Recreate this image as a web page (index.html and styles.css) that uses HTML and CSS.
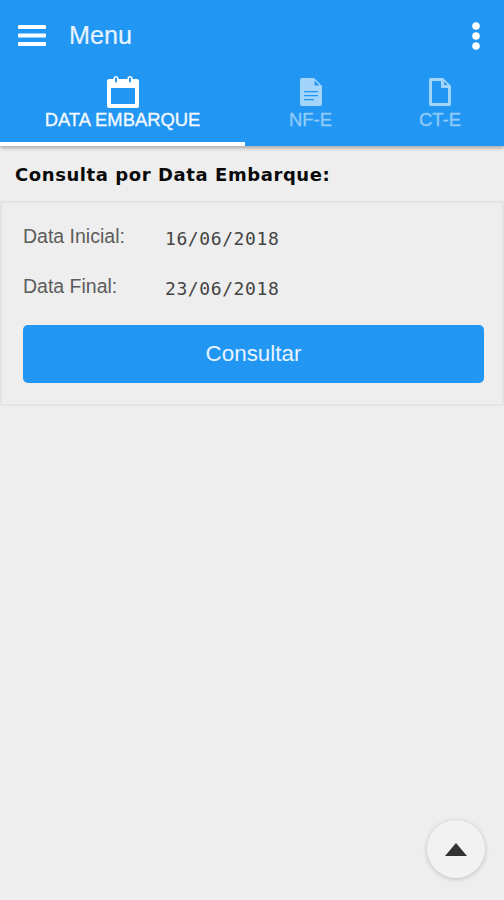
FILE: index.html
```html
<!DOCTYPE html>
<html lang="en">

<head>
    <meta charset="UTF-8">
    <meta name="viewport" content="width=device-width, initial-scale=1.0">
    <title>Consulta por Data Embarque</title>
    <link rel="stylesheet" href="styles.css">
</head>

<body>
    <div class="container">
        <header class="app-header">
            <div class="toolbar">
                <svg class="menu-icon" width="28" height="21" viewBox="0 0 28 21">
                    <rect x="0" y="0" width="28" height="4" rx="1" />
                    <rect x="0" y="8.500" width="28" height="4" rx="1" />
                    <rect x="0" y="17" width="28" height="4" rx="1" />
                </svg>
                <span class="toolbar-title">Menu</span>
                <svg class="more-icon" width="10" height="28" viewBox="0 0 10 28">
                    <circle cx="5" cy="4" r="3.8" />
                    <circle cx="5" cy="14" r="3.8" />
                    <circle cx="5" cy="24" r="3.8" />
                </svg>
            </div>

            <nav class="tabs">
                <div class="tab tab-date active">
                    <svg width="32" height="32" viewBox="0 0 32 32">
                        <path fill-rule="evenodd" d="M2 3h4.500V2.500a2.500 2.500 0 0 1 5 0V3h9V2.500a2.500 2.500 0 0 1 5 0V3H30a2 2 0 0 1 2 2v25a2 2 0 0 1-2 2H2a2 2 0 0 1-2-2V5a2 2 0 0 1 2-2zM4 12v16h24V12zM8 2.500v3a1 1 0 0 0 2 0v-3a1 1 0 0 0-2 0zM22 2.500v3a1 1 0 0 0 2 0v-3a1 1 0 0 0-2 0z" />
                    </svg>
                    <span>DATA EMBARQUE</span>
                </div>
                <div class="tab tab-nfe">
                    <svg width="22" height="28" viewBox="0 0 22 28">
                        <path fill-rule="evenodd" d="M2 0h12l8 8v18a2 2 0 0 1-2 2H2a2 2 0 0 1-2-2V2a2 2 0 0 1 2-2zM14.500 2.500V7.500h5zM4 13v1.200h14V13zM4 17v1.200h14V17zM4 21v1.200h10V21z" />
                    </svg>
                    <span>NF-E</span>
                </div>
                <div class="tab tab-cte">
                    <svg width="22" height="28" viewBox="0 0 22 28">
                        <path fill-rule="evenodd" d="M2 0h12l8 8v18a2 2 0 0 1-2 2H2a2 2 0 0 1-2-2V2a2 2 0 0 1 2-2zM3 3v22h16V10h-7V3zM15 3.500V7h3.500z" />
                    </svg>
                    <span>CT-E</span>
                </div>
            </nav>
        </header>

        <h2 class="page-title">Consulta por Data Embarque:</h2>

        <section class="search-card">
            <div class="form-row">
                <label>Data Inicial:</label>
                <span class="date-value">16/06/2018</span>
            </div>
            <div class="form-row">
                <label>Data Final:</label>
                <span class="date-value">23/06/2018</span>
            </div>
            <button class="primary-btn">Consultar</button>
        </section>

        <button class="scroll-top">
            <svg width="22" height="13" viewBox="0 0 22 13">
                <path d="M11 0l11 13H0z" />
            </svg>
        </button>
    </div>
</body>

</html>
```

FILE: styles.css
```css
/* General Reset and Basic Styles */
* {
    margin: 0;
    padding: 0;
    box-sizing: border-box;
}

body {
    font-family: 'Liberation Sans', Arial, sans-serif;
    background-color: #eeeeee;
    color: #333;
}

.container {
    display: flex;
    flex-direction: column;
    height: 900px;
    overflow: hidden;
    position: relative;
}

/* Header */
.app-header {
    background-color: #2196f3;
    color: white;
    height: 146px;
    display: flex;
    flex-direction: column;
    box-shadow: 0 2px 4px rgba(0, 0, 0, 0.3);
}

.toolbar {
    display: flex;
    align-items: center;
    height: 71px;
    padding: 0 23px 0 18px;
}

.menu-icon {
    fill: white;
    margin-right: 23px;
}

.more-icon {
    fill: white;
    margin-left: auto;
}

.toolbar-title {
    font-size: 25.2px;
    color: #e6f3fe;
    -webkit-text-stroke: 0.2px #e6f3fe;
}

/* Tabs */
.tabs {
    display: flex;
    flex: 1;
}

.tab {
    display: flex;
    flex-direction: column;
    align-items: center;
    font-size: 18.4px;
    line-height: 20px;
    color: #90cbf9;
    fill: #a3d4fa;
    -webkit-text-stroke: 0.35px #90cbf9;
}

.tab svg {
    height: 28px;
    margin-top: 7px;
    margin-bottom: 4px;
}

.tab-date {
    width: 245px;
}

.tab-date svg {
    height: 32px;
    margin-top: 5px;
    margin-bottom: 2px;
}

.tab-nfe {
    width: 131px;
}

.tab-cte {
    width: 128px;
}

.tab.active {
    color: #f2f9ff;
    fill: white;
    -webkit-text-stroke: 0.35px #f2f9ff;
    border-bottom: 4px solid white;
}

/* Content */
.page-title {
    font-family: 'DejaVu Sans', sans-serif;
    font-size: 18px;
    line-height: 22px;
    letter-spacing: 0.58px;
    color: #0a0a0a;
    margin: 18px 0 15px 15px;
}

.search-card {
    border: 2px solid #e4e4e4;
    padding: 16px 18px 20px 21px;
    height: 205px;
}

.form-row {
    display: flex;
    height: 50px;
}

.form-row label {
    width: 142px;
    font-size: 19.5px;
    line-height: 34px;
    color: #5c5c5c;
}

.date-value {
    font-family: 'DejaVu Sans Mono', monospace;
    font-size: 18px;
    letter-spacing: 0.6px;
    line-height: 40px;
    color: #444;
}

.primary-btn {
    display: block;
    width: 100%;
    height: 58px;
    margin-top: 6px;
    background-color: #2196f3;
    color: #e6f3fe;
    border: none;
    border-radius: 5px;
    font-family: inherit;
    font-size: 22.4px;
}

.scroll-top {
    position: absolute;
    left: 427px;
    top: 820px;
    width: 58px;
    height: 58px;
    border: none;
    border-radius: 50%;
    background-color: #f2f2f2;
    box-shadow: 0 1px 5px rgba(0, 0, 0, 0.2);
    display: flex;
    align-items: center;
    justify-content: center;
    fill: #333;
}
```
